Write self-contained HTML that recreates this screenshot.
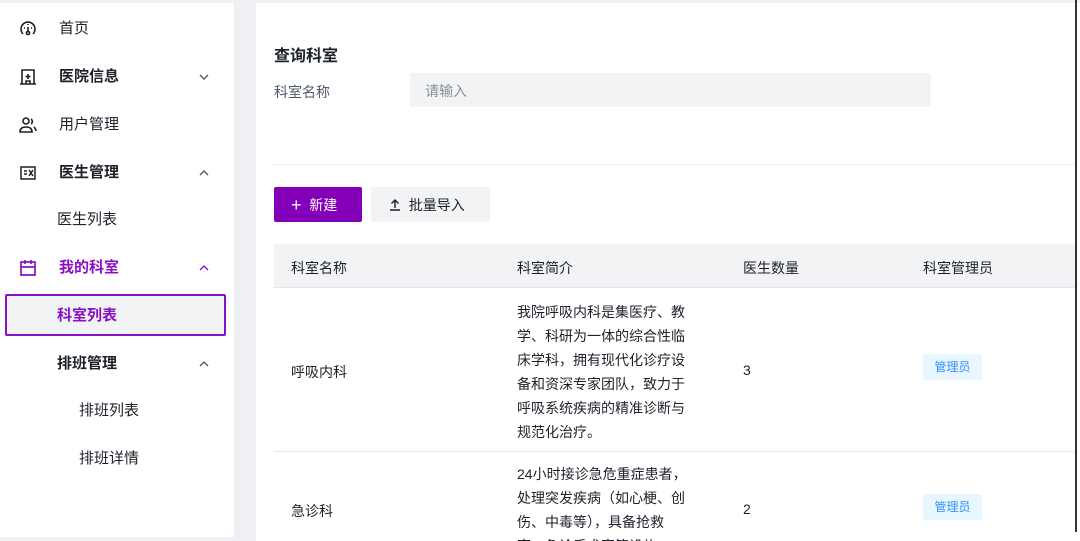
<!DOCTYPE html>
<html><head><meta charset="utf-8"><style>
*{margin:0;padding:0;box-sizing:border-box}
body{width:1080px;height:541px;overflow:hidden;background:#fff;font-family:"Liberation Sans","Noto Sans CJK SC",sans-serif;color:#1d2129;position:relative;font-size:14px}
.abs{position:absolute}
.side{left:0;top:3px;width:234px;height:538px;background:#fff}
.gap{left:234px;top:0;width:22px;height:541px;background:#eef0f3}
.topl{left:0;top:0;width:1080px;height:3px;background:#eef0f3}
.it{position:absolute;left:0;width:234px;height:40px;line-height:40px;font-size:15px;color:#1d2129}
.it .t{position:absolute;left:59px}
.it .ic{position:absolute;left:19px;top:11px;width:18px;height:18px}
.chev{position:absolute;left:198px;top:14px;width:12px;height:12px}
.rl{left:1075px;top:0;width:2px;height:532px;background:#333}
.td{position:absolute;font-size:14px;color:#1d2129}
.tag{position:absolute;width:59px;height:26px;background:#e8f7ff;color:#3491fa;font-size:12px;line-height:26px;text-align:center;border-radius:2px}
</style></head><body>
<div class="abs topl"></div>
<div class="abs side"></div>
<div class="abs gap"></div>
<div class="abs" style="left:0;top:537px;width:256px;height:4px;background:#eef0f3"></div>

<div class="it" style="top:9px"><svg class="ic" viewBox="0 0 18 18" fill="none" stroke="#1d2129" stroke-width="1.6"><path d="M4 14A7 7 0 1 1 14 14"/><circle cx="9" cy="13" r="1.6"/><path d="M9 11.4V7M5 8h1M12 8h1M9 4v1"/></svg><span class="t">首页</span></div>
<div class="it" style="top:57px"><svg class="ic" viewBox="0 0 18 18" fill="none" stroke="#1d2129" stroke-width="1.6"><path d="M3 2h12v14H3zM1 16h16M9 6v5M6.5 8.5h5M7 16v-3h4v3"/></svg><span class="t" style="font-weight:bold">医院信息</span><svg class="chev" viewBox="0 0 12 12" fill="none" stroke="#4e5969" stroke-width="1.4"><path d="M2 4l4 4 4-4"/></svg></div>
<div class="it" style="top:105px"><svg class="ic" viewBox="0 0 18 18" fill="none" stroke="#1d2129" stroke-width="1.6"><circle cx="7" cy="5" r="3"/><path d="M1 16c0-4 3-5 6-5s6 1 6 5H1zM12 3a3 3 0 0 1 0 5M15 11c1 1 2 2 2 4"/></svg><span class="t">用户管理</span></div>
<div class="it" style="top:153px"><svg class="ic" viewBox="0 0 18 18" fill="none" stroke="#1d2129" stroke-width="1.5"><path d="M2 3h14v12H2zM5 7h3M5 10h3M10 6l4 6M14 6l-4 6"/></svg><span class="t" style="font-weight:bold">医生管理</span><svg class="chev" viewBox="0 0 12 12" fill="none" stroke="#4e5969" stroke-width="1.4"><path d="M2 8l4-4 4 4"/></svg></div>
<div class="it" style="top:200px"><span class="t" style="left:57px">医生列表</span></div>
<div class="it" style="top:248px;color:#8a10c4"><svg class="ic" viewBox="0 0 18 18" fill="none" stroke="#8a10c4" stroke-width="1.7"><path d="M2 3h14v13H2zM2 8h14M6 1v4M12 1v4"/></svg><span class="t" style="font-weight:bold">我的科室</span><svg class="chev" viewBox="0 0 12 12" fill="none" stroke="#8a10c4" stroke-width="1.4"><path d="M2 8l4-4 4 4"/></svg></div>
<div class="abs" style="left:5px;top:294px;width:221px;height:42px;background:#f2f3f5;border:2px solid #8a10c4;border-radius:2px"></div>
<div class="it" style="top:296px;color:#8a10c4"><span class="t" style="left:57px;font-weight:bold">科室列表</span></div>
<div class="it" style="top:344px"><span class="t" style="left:57px;font-weight:bold">排班管理</span><svg class="chev" viewBox="0 0 12 12" fill="none" stroke="#4e5969" stroke-width="1.4"><path d="M2 8l4-4 4 4"/></svg></div>
<div class="it" style="top:391px"><span class="t" style="left:79px">排班列表</span></div>
<div class="it" style="top:439px"><span class="t" style="left:79px">排班详情</span></div>

<div class="abs" style="left:274px;top:42px;font-size:16px;font-weight:bold">查询科室</div>
<div class="abs" style="left:274px;top:82px;font-size:14px;color:#4e5969">科室名称</div>
<div class="abs" style="left:410px;top:73px;width:521px;height:34px;background:#f2f3f5;border-radius:2px;color:#86909c;line-height:36px;padding-left:15px;font-size:14px">请输入</div>
<div class="abs" style="left:274px;top:164px;width:801px;height:1px;background:#eef0f3"></div>
<div class="abs" style="left:274px;top:187px;width:88px;height:35px;background:#8400b8;border-radius:2px;color:#fff;line-height:36px;font-size:14px;padding-left:17px"><span style="font-size:18px;vertical-align:-1px">+</span>&nbsp; 新建</div>
<div class="abs" style="left:371px;top:187px;width:119px;height:35px;background:#f2f3f5;border-radius:2px;color:#1d2129;line-height:36px;font-size:14px;padding-left:18px"><svg width="12" height="13" viewBox="0 0 12 13" fill="none" stroke="#1d2129" stroke-width="1.4" style="vertical-align:-1px"><path d="M6 10V2M2.5 5.5L6 2l3.5 3.5M1 12h10"/></svg>&nbsp; 批量导入</div>

<div class="abs" style="left:274px;top:244px;width:801px;height:44px;background:#f2f3f5;border-bottom:1px solid #e5e6eb"></div>
<div class="td" style="left:291px;top:258px">科室名称</div>
<div class="td" style="left:517px;top:258px">科室简介</div>
<div class="td" style="left:743px;top:258px">医生数量</div>
<div class="td" style="left:923px;top:258px">科室管理员</div>

<div class="td" style="left:291px;top:362px">呼吸内科</div>
<div class="td" style="left:517px;top:300px;line-height:24px;width:172px">我院呼吸内科是集医疗、教学、科研为一体的综合性临床学科，拥有现代化诊疗设备和资深专家团队，致力于呼吸系统疾病的精准诊断与规范化治疗。</div>
<div class="td" style="left:743px;top:362px">3</div>
<div class="tag" style="left:923px;top:354px">管理员</div>
<div class="abs" style="left:274px;top:451px;width:801px;height:1px;background:#e5e6eb"></div>

<div class="td" style="left:291px;top:501px">急诊科</div>
<div class="td" style="left:517px;top:462px;line-height:24px;width:172px;height:79px;overflow:hidden">24小时接诊急危重症患者，处理突发疾病（如心梗、创伤、中毒等），具备抢救室、急诊手术室等设施。</div>
<div class="td" style="left:743px;top:501px">2</div>
<div class="tag" style="left:923px;top:494px">管理员</div>

<div class="abs rl"></div>
</body></html>
